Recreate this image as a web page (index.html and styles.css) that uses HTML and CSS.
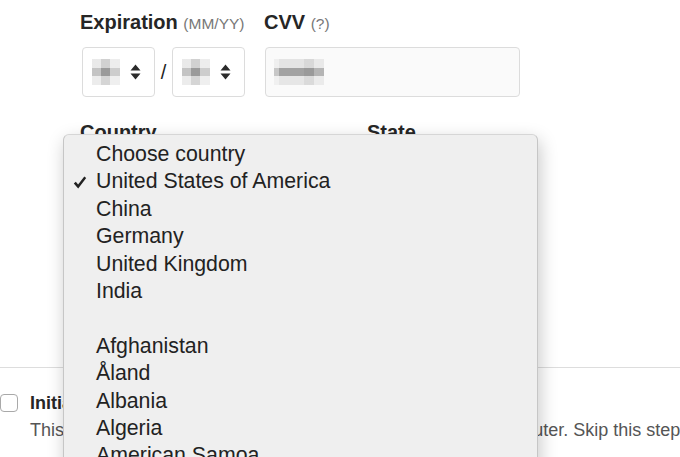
FILE: index.html
```html
<!DOCTYPE html>
<html lang="en">
<head>
    <meta charset="UTF-8">
    <meta name="viewport" content="width=device-width, initial-scale=1.0">
    <title>Payment details</title>
    <link rel="stylesheet" href="styles.css">
</head>
<body>
    <main class="page">
        <section class="card-row">
            <div class="field">
                <label class="label">Expiration <span class="hint">(MM/YY)</span></label>
                <div class="expiry">
                    <div class="select">
                        <span class="blur"></span>
                        <svg class="arrows" width="11" height="16" viewBox="0 0 11 16">
                            <path d="M5.5 0.5 L10.5 6.5 L0.5 6.5 Z M0.5 9.5 L10.5 9.5 L5.5 15.5 Z" fill="#2b2b2b"/>
                        </svg>
                    </div>
                    <span class="slash">/</span>
                    <div class="select">
                        <span class="blur"></span>
                        <svg class="arrows" width="11" height="16" viewBox="0 0 11 16">
                            <path d="M5.5 0.5 L10.5 6.5 L0.5 6.5 Z M0.5 9.5 L10.5 9.5 L5.5 15.5 Z" fill="#2b2b2b"/>
                        </svg>
                    </div>
                </div>
            </div>
            <div class="field">
                <label class="label">CVV <span class="hint">(?)</span></label>
                <div class="input">
                    <span class="blur wide"></span>
                </div>
            </div>
        </section>

        <section class="address-row">
            <label class="label country">Country</label>
            <label class="label">State</label>
        </section>
    </main>

    <hr class="divider">

    <section class="option">
        <span class="checkbox"></span>
        <div class="option-text">
            <strong class="option-title">Initialize this computer</strong>
            <p class="option-desc">This saves your card details so checkout is easier on this computer. Skip this step if you share it.</p>
        </div>
    </section>

    <!-- native select popup, open over the form -->
    <div class="popup">
        <ul class="menu">
            <li>Choose country</li>
            <li class="checked">
                <svg class="check" width="14" height="13" viewBox="0 0 14 13">
                    <path d="M0.8 7.4 L2.8 5.7 L5.1 8.6 L11.3 0.6 L13.2 2 L5.2 12.4 Z" fill="#222"/>
                </svg>
                United States of America
            </li>
            <li>China</li>
            <li>Germany</li>
            <li>United Kingdom</li>
            <li>India</li>
            <li class="gap"></li>
            <li>Afghanistan</li>
            <li>Åland</li>
            <li>Albania</li>
            <li>Algeria</li>
            <li>American Samoa</li>
            <li>Andorra</li>
        </ul>
    </div>
</body>
</html>
```

FILE: styles.css
```css
body {
    margin: 0;
    font-family: "Liberation Sans", Arial, sans-serif;
    color: #333;
    background-color: white;
    overflow: hidden;
    height: 457px;
    position: relative;
}
.page {
    padding: 10px 0 0 80px;
}
.card-row {
    display: flex;
    gap: 19px;
}
.label {
    display: block;
    font-size: 20px;
    font-weight: bold;
    line-height: 24px;
    color: #262626;
}
.hint {
    font-size: 15.5px;
    font-weight: normal;
    color: #777;
}
.expiry {
    display: flex;
    align-items: center;
    margin: 11px 0 0 2px;
}
.select {
    width: 62px;
    height: 48px;
    border: 1px solid #dcdcdc;
    border-radius: 4px;
    display: flex;
    align-items: center;
    padding-left: 9px;
    gap: 10px;
}
.slash {
    width: 17px;
    text-align: center;
    font-size: 20px;
    color: #222;
}
.blur {
    display: block;
    width: 28px;
    height: 26px;
    background:
        linear-gradient(to right, rgba(255, 255, 255, 0.35) 0 9px, rgba(0, 0, 0, 0.06) 9px 18px, rgba(255, 255, 255, 0.45) 18px),
        linear-gradient(to bottom, #dedede 0 9px, #a4a4a4 9px 17px, #e2e2e2 17px);
    filter: blur(0.6px);
}
.blur.wide {
    width: 50px;
    background:
        linear-gradient(to right, rgba(255, 255, 255, 0.4) 0 5px, transparent 5px 30px, rgba(0, 0, 0, 0.05) 30px 40px, rgba(255, 255, 255, 0.2) 40px),
        linear-gradient(to bottom, #e4e4e4 0 9px, #a2a2a2 9px 17px, #e6e6e6 17px);
}
.input {
    width: 245px;
    height: 48px;
    margin-top: 11px;
    margin-left: 1px;
    border: 1px solid #dcdcdc;
    border-radius: 4px;
    background-color: #fafafa;
    display: flex;
    align-items: center;
    padding-left: 8px;
}
.address-row {
    display: flex;
    margin-top: 23px;
}
.country {
    width: 287px;
}
.divider {
    border: none;
    border-top: 1px solid #dddddd;
    margin: 0;
    position: absolute;
    top: 367px;
    left: 0;
    right: 0;
}
.option {
    position: absolute;
    top: 393px;
    left: 0;
    display: flex;
    gap: 12px;
}
.checkbox {
    width: 16px;
    height: 16px;
    border: 1px solid #a9a9a9;
    border-radius: 4px;
    margin-top: 1px;
    flex-shrink: 0;
}
.option-title {
    display: block;
    font-size: 18px;
    line-height: 20px;
    color: #262626;
}
.option-desc {
    margin: 7px 0 0;
    font-size: 18px;
    line-height: 20px;
    color: #555;
    white-space: nowrap;
}
.popup {
    position: absolute;
    left: 63px;
    top: 134px;
    width: 473px;
    height: 360px;
    background-color: #efefef;
    border: 1px solid #c6c6c6;
    border-top-color: #d6d6d6;
    border-radius: 6px;
    box-shadow: 2px 6px 18px rgba(0, 0, 0, 0.22);
}
.menu {
    list-style: none;
    margin: 0;
    padding: 6px 0 0 32px;
    font-size: 21.3px;
    line-height: 27.4px;
    color: #222;
}
.menu li {
    position: relative;
    height: 27.4px;
}
.check {
    position: absolute;
    left: -23px;
    top: 8px;
}
```
